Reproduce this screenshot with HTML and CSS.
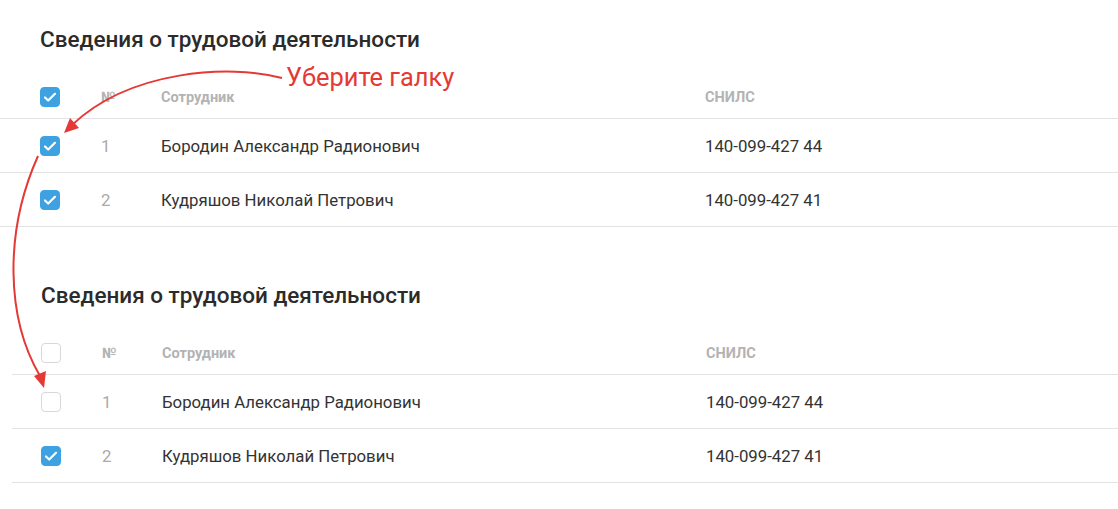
FILE: index.html
```html
<!DOCTYPE html>
<html lang="ru">
<head>
	<meta charset="UTF-8">
	<title>Сведения о трудовой деятельности</title>
	<link rel="stylesheet" href="styles.css">
</head>
<body>
	<div class="page">
		<section class="block first">
			<h2 class="title">Сведения о трудовой деятельности</h2>
			<div class="list">
				<div class="row head">
					<span class="check"><span class="box on"></span></span>
					<span class="num">№</span>
					<span class="name">Сотрудник</span>
					<span class="snils">СНИЛС</span>
				</div>
				<div class="row">
					<span class="check"><span class="box on"></span></span>
					<span class="num">1</span>
					<span class="name">Бородин Александр Радионович</span>
					<span class="snils">140-099-427 44</span>
				</div>
				<div class="row">
					<span class="check"><span class="box on"></span></span>
					<span class="num">2</span>
					<span class="name">Кудряшов Николай Петрович</span>
					<span class="snils">140-099-427 41</span>
				</div>
			</div>
		</section>

		<section class="block second">
			<h2 class="title">Сведения о трудовой деятельности</h2>
			<div class="list">
				<div class="row head">
					<span class="check"><span class="box"></span></span>
					<span class="num">№</span>
					<span class="name">Сотрудник</span>
					<span class="snils">СНИЛС</span>
				</div>
				<div class="row">
					<span class="check"><span class="box"></span></span>
					<span class="num">1</span>
					<span class="name">Бородин Александр Радионович</span>
					<span class="snils">140-099-427 44</span>
				</div>
				<div class="row">
					<span class="check"><span class="box on"></span></span>
					<span class="num">2</span>
					<span class="name">Кудряшов Николай Петрович</span>
					<span class="snils">140-099-427 41</span>
				</div>
			</div>
		</section>

		<div class="hint">Уберите галку</div>
		<svg class="arrows" width="1118" height="509" viewBox="0 0 1118 509">
			<path d="M282 78 C230 64 130 70 72 125" fill="none" stroke="#e53935" stroke-width="2"/>
			<polygon points="64,133 70,118 79,128" fill="#e53935"/>
			<path d="M38 156 C4 232 6 318 40 376" fill="none" stroke="#e53935" stroke-width="2"/>
			<polygon points="44,388 34,376 46,371" fill="#e53935"/>
		</svg>
	</div>
</body>
</html>
```

FILE: styles.css
```css
*{margin: 0; padding: 0; box-sizing: border-box;}
body{background: #fff; font-family: Roboto, "Liberation Sans", sans-serif; color: #333;}
.page{
	width: 1118px;
	height: 509px;
	position: relative;
	overflow: hidden;
}
.block.first{
	padding-top: 26px;
}
.block.second{
	margin-left: 12px;
	padding-top: 55px;
}
.title{
	font-size: 22.5px;
	line-height: 26px;
	font-weight: 500;
	color: #2b2b2b;
	padding-left: 40px;
	margin-bottom: 24px;
}
.second .title{
	padding-left: 29px;
}
.row{
	display: flex;
	align-items: center;
	height: 54px;
	padding-left: 40px;
	border-bottom: 1px solid #e3e3e3;
	font-size: 16.8px;
}
.second .row{
	padding-left: 29px;
}
.row.head{
	height: 43px;
	font-size: 14.5px;
	font-weight: 700;
	color: #b3b3b3;
}
.check{
	width: 61px;
	display: flex;
}
.num{
	width: 60px;
	color: #aaa;
}
.head .num{
	color: #b3b3b3;
}
.name{
	width: 544px;
}
.box{
	width: 20px;
	height: 20px;
	border: 1px solid #d8d8d8;
	border-radius: 4px;
	background: #fff;
}
.box.on{
	border-color: #3ea2e2;
	background: #3ea2e2 url("data:image/svg+xml,%3Csvg xmlns='http://www.w3.org/2000/svg' width='20' height='20'%3E%3Cpath d='M5 10.5l3.2 3L15 6.8' fill='none' stroke='%23fff' stroke-width='2.2' stroke-linecap='round' stroke-linejoin='round'/%3E%3C/svg%3E") no-repeat -1px -1px;
}
.hint{
	position: absolute;
	top: 61px;
	left: 286px;
	font-size: 25.4px;
	line-height: 32px;
	color: #e53935;
}
.arrows{
	position: absolute;
	top: 0;
	left: 0;
	pointer-events: none;
}
```
